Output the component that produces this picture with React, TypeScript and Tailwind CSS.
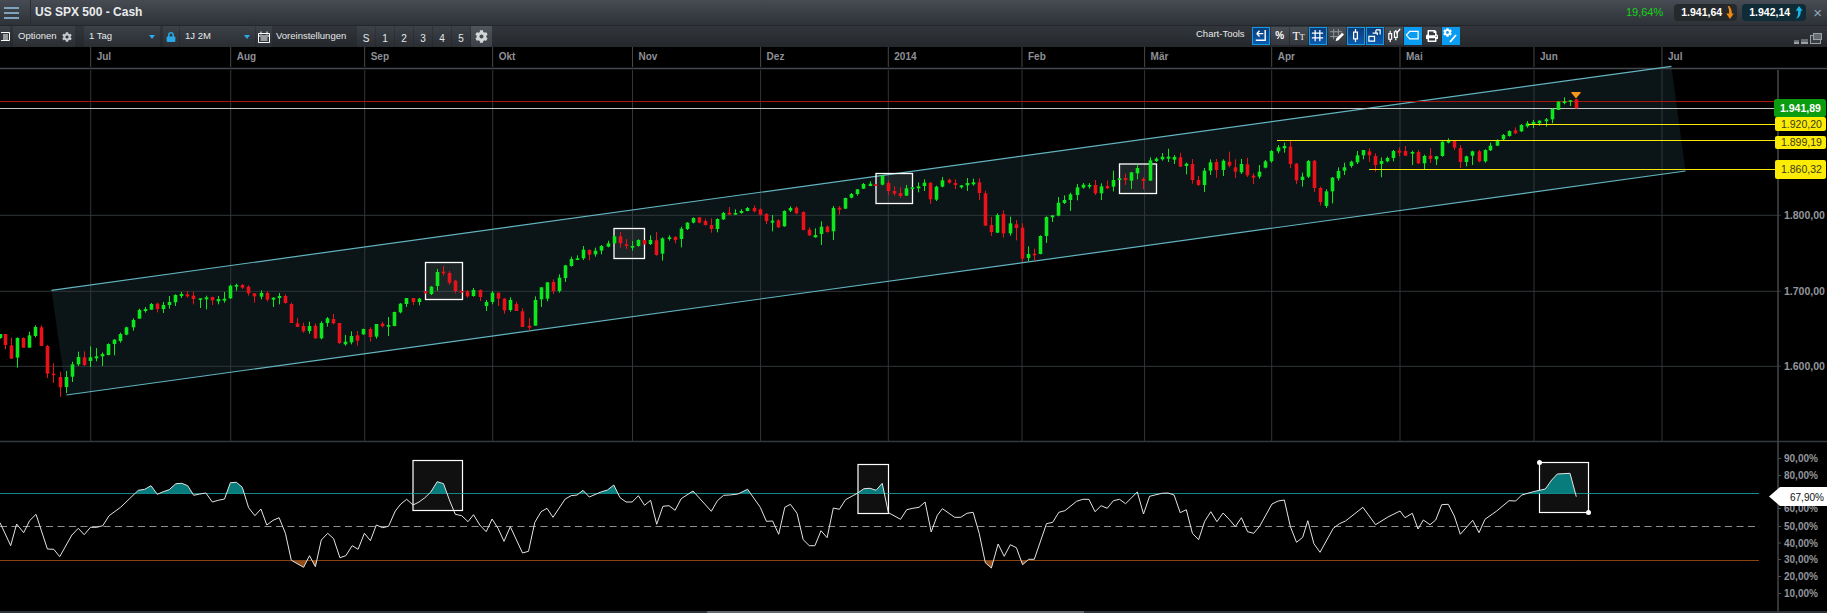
import type { ReactNode } from 'react';
import { FaCog, FaLock, FaPrint } from 'react-icons/fa';

type Row = [number, string, number, number, number, number];

// candles read off the picture: x, colour, wick top, body top, body bottom, wick bottom
const seg1: Row[] = [
  [0,'g',252,252,264,266],[16,'r',252,252,285,298],[34,'r',263,286,326,326],[52,'g',262,264,323,353],[70,'r',262,264,293,293],[88,'g',245,256,293,293],[107,'g',226,231,258,262],[125,'r',226,232,288,288],[143,'r',285,288,371,384],[161,'r',340,371,375,399],[180,'r',365,381,412,440],[198,'g',363,381,411,429],[217,'g',335,343,380,396],[235,'g',305,321,343,348],[253,'r',304,322,345,348],[271,'g',289,322,333,351],[289,'g',294,319,325,334],[307,'g',307,312,319,348],[326,'g',280,282,315,316],[344,'g',267,269,282,316],[362,'g',248,252,273,278],[380,'g',230,232,254,256],[399,'g',205,210,232,242],[417,'g',176,180,206,206],[436,'g',171,177,183,188],[454,'g',159,162,179,180],[472,'r',158,161,177,187],[490,'g',156,165,177,189],[508,'g',138,156,165,176],[527,'g',133,135,157,168],[545,'g',126,132,138,144],[563,'r',123,133,139,143],[581,'r',125,137,147,163],[600,'g',145,145,149,174],[619,'g',137,142,148,178],[637,'r',140,141,151,165],[655,'g',138,147,154,163],[673,'g',126,146,152,158],[691,'g',104,107,145,147],[709,'g',101,105,110,122],[728,'r',102,105,113,117],[746,'r',106,110,130,137],[764,'r',129,130,139,158],[783,'g',121,129,140,148],[801,'r',124,129,149,154],[819,'g',142,143,149,171],[838,'g',129,138,144,163],[856,'r',133,138,159,161],[874,'r',158,162,219,219],[892,'r',204,220,231,231],
];
const seg2: Row[] = [
  [10,'r',338,348,364,368],[28,'g',335,348,363,371],[46,'r',340,347,385,386],[65,'g',334,339,385,388],[83,'g',321,325,339,350],[101,'r',312,327,340,343],[119,'r',339,339,399,402],[137,'g',375,395,403,407],[155,'g',364,378,397,403],[173,'r',363,376,392,407],[191,'g',356,357,373,375],[210,'r',352,357,381,395],[229,'g',342,342,380,386],[247,'r',335,341,349,352],[265,'g',321,345,350,378],[284,'g',305,306,348,349],[302,'g',279,281,307,310],[320,'g',264,264,282,291],[340,'r',264,264,276,285],[358,'g',264,266,276,286],[376,'r',243,244,250,250],[394,'g',228,230,252,255],[412,'g',177,186,228,242],[430,'r',168,185,190,197],[449,'r',183,189,218,224],[466,'r',210,212,243,250],[484,'r',240,243,247,248],[503,'r',240,244,259,263],[521,'g',234,240,258,260],[540,'r',238,240,261,273],[558,'g',270,276,288,303],[577,'g',243,248,276,283],[595,'r',248,248,266,288],[613,'r',264,266,301,311],[632,'g',262,270,300,305],[650,'r',275,282,303,303],[668,'r',295,304,351,351],[687,'r',324,347,353,362],[705,'g',259,270,347,347],[723,'g',232,232,268,291],[741,'g',216,217,266,274],[760,'r',208,216,243,252],[778,'g',193,203,243,248],[797,'g',165,166,204,216],[814,'g',140,147,168,170],[832,'g',136,145,150,150],[850,'g',108,119,145,150],[868,'r',118,120,134,151],[887,'g',113,122,133,140],[905,'g',105,108,122,133],[924,'g',92,100,110,112],[942,'g',76,79,100,100],[960,'r',66,79,100,113],[979,'r',87,103,106,117],[997,'g',93,108,113,122],[1015,'g',88,90,108,110],[1033,'r',90,90,103,103],[1052,'g',76,90,102,105],[1070,'r',66,91,135,137],[1088,'g',82,85,131,152],[1107,'g',76,82,87,92],[1125,'r',78,81,90,100],[1143,'g',50,56,87,112],[1161,'g',36,38,57,60],[1180,'g',22,24,38,40],[1198,'r',22,22,38,40],
];
const seg3: Row[] = [
  [16,'r',176,183,195,197],[34,'r',175,195,207,218],[52,'g',175,177,207,217],[70,'g',156,159,178,180],[88,'r',141,158,164,164],[107,'g',148,159,164,165],[125,'g',148,153,159,161],[143,'g',141,144,153,154],[162,'r',136,144,154,157],[180,'r',145,148,164,167],[199,'r',159,162,183,192],[217,'g',165,182,188,214],[235,'r',178,181,202,204],[254,'g',151,153,199,200],[271,'g',139,144,152,156],[289,'r',139,143,160,163],[309,'r',154,156,210,211],[327,'r',202,209,226,228],[345,'g',205,225,232,233],[364,'g',184,200,222,255],[382,'r',196,200,216,218],[400,'g',138,144,214,240],[418,'r',138,143,149,164],[436,'g',113,114,146,147],[454,'g',99,102,113,115],[473,'g',87,88,102,107],[491,'g',69,72,86,87],[510,'g',64,71,78,79],[527,'r',72,73,78,78],[546,'g',47,47,74,76],[564,'r',62,69,93,105],[582,'r',79,93,101,107],[601,'r',82,99,108,114],[619,'g',75,85,107,108],[637,'g',81,82,87,88],[655,'g',67,79,85,97],[673,'g',58,68,78,93],[691,'r',67,68,118,132],[710,'g',77,80,119,123],[728,'g',51,61,80,82],[747,'r',56,59,68,71],[766,'r',58,69,75,87],[783,'g',75,76,82,86],[802,'g',54,69,76,93],[820,'g',56,67,73,77],[838,'r',55,67,99,120],[856,'r',92,100,197,197],[874,'r',171,195,216,228],[892,'g',160,165,218,219],[911,'r',151,162,220,233],[930,'g',170,190,220,227],[948,'r',180,193,204,241],[966,'r',190,203,296,306],[984,'g',259,282,294,304],[1003,'r',266,281,286,303],[1021,'g',226,228,282,283],[1040,'g',169,171,228,249],[1058,'g',166,166,172,186],[1076,'g',111,128,167,169],[1094,'g',106,120,129,132],[1112,'g',98,103,120,153],[1131,'g',72,82,105,121],[1149,'g',69,74,83,86],[1167,'g',69,75,80,86],
];
const seg4: Row[] = [
  [16,'r',150,165,190,195],[34,'g',160,169,190,210],[52,'r',152,168,175,177],[70,'g',122,150,170,184],[88,'g',145,145,150,150],[107,'r',131,144,150,165],[125,'g',126,127,152,177],[143,'g',104,114,130,148],[161,'r',142,147,153,178],[180,'g',82,91,152,152],[198,'g',82,86,93,96],[217,'g',69,80,88,92],[235,'g',56,80,86,96],[253,'g',75,81,89,102],[271,'r',68,82,110,111],[289,'g',98,101,108,133],[307,'r',87,102,150,161],[326,'r',138,150,165,168],[344,'g',114,122,165,186],[362,'g',88,97,122,135],[380,'r',87,96,120,143],[399,'g',88,92,120,138],[418,'r',65,95,107,112],[436,'r',88,112,125,144],[454,'g',87,102,127,132],[472,'r',83,103,136,141],[490,'r',130,137,143,162],[509,'g',105,125,140,146],[527,'g',90,94,113,115],[545,'g',60,63,94,98],[564,'g',45,52,64,70],[582,'g',38,48,55,68],[600,'r',32,50,102,114],[619,'r',99,101,151,162],[637,'g',128,140,150,170],[655,'g',90,93,140,144],[673,'r',90,92,174,186],[691,'r',170,174,216,226],[709,'g',178,184,228,234],[728,'g',141,143,184,220],[746,'g',112,123,145,152],[764,'g',98,112,122,135],[783,'g',92,95,108,113],[801,'g',63,76,97,102],[819,'g',60,60,76,88],[838,'r',55,64,76,96],[856,'r',70,78,105,125],[874,'g',82,93,102,142],[892,'g',80,84,94,97],[910,'g',60,63,84,94],[928,'r',52,62,68,79],[947,'r',48,63,77,78],[966,'g',62,66,71,105],[984,'r',60,66,100,102],[1002,'g',74,78,100,118],[1021,'r',54,77,87,99],[1039,'g',78,79,88,105],[1057,'g',34,35,78,80],[1075,'g',25,30,38,40],[1094,'r',30,32,53,60],[1112,'r',45,54,96,114],[1130,'g',77,79,96,109],[1148,'g',62,64,77,105],[1167,'r',60,64,94,97],[1185,'g',58,60,94,98],
];
const seg5: Row[] = [
  [568,'g',248,257,271,273],[587,'g',238,240,257,258],[605,'g',222,225,238,240],[623,'g',211,213,228,230],[641,'r',202,211,220,222],[659,'g',192,195,214,216],[677,'g',183,190,199,203],[695,'g',180,186,194,204],[713,'g',181,182,190,197],[732,'g',174,178,184,200],[750,'g',145,147,178,190],[768,'g',124,125,150,150],[786,'g',112,124,129,133],[804,'g',120,121,125,138],[822,'r',118,118,145,145],
];

const toFull = (rows: Row[], ox: number, oy: number, sx: number) =>
  rows.map(([x, c, wt, bt, bb, wb]) => ({
    x: ox + x / sx,
    c,
    wt: oy + wt / 3,
    bt: oy + bt / 3,
    bb: oy + bb / 3,
    wb: oy + wb / 3,
  }));

const candles = [
  ...toFull(seg1, 0, 250, 3),
  ...toFull(seg2, 300, 210, 3),
  ...toFull(seg3, 700, 160, 3),
  ...toFull(seg4, 1090, 130, 3),
  ...toFull(seg5, 1300, 60, 2.975),
];

const rsiA = [[0,278],[27,347],[42,282],[60,308],[75,272],[91,253],[120,357],[136,358],[151,380],[182,315],[198,295],[213,314],[229,292],[245,292],[260,287],[276,257],[305,232],[350,181],[366,178],[382,167],[398,193],[413,185],[428,179],[445,161],[460,160],[475,167],[490,196],[505,192],[521,189],[537,216],[552,211],[568,207],[583,158],[598,157],[613,172],[629,233],[645,257],[660,237],[675,285],[691,271],[706,263],[722,310],[737,391],[768,412],[783,377],[798,410],[813,330],[829,310],[844,326],[860,383],[875,377],[891,347],[906,358],[922,310],[937,332],[952,285],[968,293],[983,289],[1000,243],[1014,222],[1029,208],[1045,225],[1060,216],[1075,203],[1090,186],[1106,155],[1122,161],[1137,210],[1152,253],[1168,257],[1184,275],[1198,254],[1214,285],[1230,305],[1245,267],[1260,295],[1275,334],[1291,290],[1322,369],[1337,364],[1353,277],[1369,245],[1384,235],[1399,262],[1430,207],[1445,197],[1460,195],[1475,181],[1491,201],[1522,185],[1537,180],[1553,165]];
const rsiB = [[0,203],[12,216],[24,216],[36,197],[48,226],[60,211],[72,283],[84,229],[96,227],[108,241],[120,206],[143,183],[179,244],[191,212],[203,196],[215,195],[231,192],[250,178],[275,232],[287,274],[299,273],[311,313],[323,232],[334,223],[347,250],[359,329],[371,347],[382,347],[394,302],[406,323],[418,234],[430,238],[442,209],[466,189],[478,176],[490,175],[502,181],[514,160],[526,248],[550,268],[562,239],[574,235],[586,232],[598,216],[610,306],[622,256],[632,236],[656,262],[668,262],[680,250],[692,247],[704,310],[716,398],[728,414],[741,342],[753,379],[765,344],[777,353],[789,404],[801,388],[812,388],[836,281],[848,277],[860,247],[872,242],[895,214],[907,208],[919,208],[931,245],[943,227],[955,235],[967,212],[979,208],[991,221],[1014,186],[1026,252],[1038,199],[1062,190],[1074,189],[1086,195],[1098,248],[1110,239],[1122,310],[1134,329],[1146,274],[1158,245],[1170,275],[1182,249],[1194,268],[1206,290],[1218,263],[1230,305],[1242,310],[1254,288],[1278,222],[1290,213],[1302,210],[1314,290],[1326,337],[1338,322],[1348,272],[1360,341],[1372,367],[1398,295],[1410,281],[1422,273],[1456,232],[1481,284],[1505,261]];
const rsiC = [[0,243],[15,263],[37,250],[54,297],[70,270],[90,284],[107,270],[125,224],[145,223],[163,258],[181,313],[218,271],[237,308],[255,268],[290,243],[327,212],[347,213],[365,195],[400,185],[436,177],[455,150],[472,132],[510,130],[529,200]];

const rsiPoints = [
  ...rsiA.map(([x, y]) => [x / 2.53, 430 + y / 3]),
  ...rsiB.map(([x, y]) => [620 + x / 1.96, 430 + y / 3]),
  ...rsiC.map(([x, y]) => [1400 + x / 3, 430 + y / 3]),
];
const rsiLine = rsiPoints.map(([x, y]) => `${x.toFixed(1)},${y.toFixed(1)}`).join(' ');
const lastX = rsiPoints[rsiPoints.length - 1][0].toFixed(1);

const months = [
  ['Jul', 90.7], ['Aug', 230.7], ['Sep', 364.7], ['Okt', 492.7], ['Nov', 632.5], ['Dez', 760.6],
  ['2014', 888.3], ['Feb', 1022], ['Mär', 1144.6], ['Apr', 1271.7], ['Mai', 1400], ['Jun', 1534], ['Jul', 1662],
] as const;

const priceBoxes = [
  [425.5, 262.5, 37, 37],
  [614, 228.5, 30.5, 30],
  [876, 173.5, 36.5, 30],
  [1119.5, 164, 37, 29.5],
];
const rsiBoxes = [
  [413, 460.5, 49.5, 50],
  [858, 464.5, 30.5, 49],
  [1539.5, 462.5, 49, 50],
];
const rsiLabels = [
  ['90,00%', 458.5], ['80,00%', 475.5], ['60,00%', 508.5], ['50,00%', 526.5], ['40,00%', 543], ['30,00%', 559.5], ['20,00%', 576.5], ['10,00%', 593.5],
] as const;
const levelTags = [
  ['1.920,20', 117, 14, 124.5],
  ['1.899,19', 136, 13, 142.5],
  ['1.860,32', 160, 19, 169.5],
] as const;

function Btn({ w, className = '', children }: { w: string; className?: string; children?: ReactNode }) {
  return (
    <div className={`flex items-center justify-center bg-gradient-to-b from-[#3c4148] to-[#2a2e33] ${w} ${className}`}>
      {children}
    </div>
  );
}

function Caret() {
  return <div className="h-0 w-0 border-x-[3px] border-t-[4px] border-x-transparent border-t-[#29a9e8]" />;
}

function ToolBtn({ tone, children }: { tone: 'outline' | 'gray' | 'dark' | 'bright'; children: ReactNode }) {
  const tones = {
    outline: 'bg-gradient-to-b from-[#0a3c78] to-[#0b5bb0] border border-[#129be6]',
    gray: 'bg-gradient-to-b from-[#494e55] to-[#33373d]',
    dark: 'bg-gradient-to-b from-[#3f4349] to-[#2c3035]',
    bright: 'bg-[#0a9cf0]',
  };
  return <div className={`flex h-[18px] w-[18px] items-center justify-center ${tones[tone]}`}>{children}</div>;
}

function ToolIcon({ children }: { children: ReactNode }) {
  return (
    <svg viewBox="0 0 16 16" className="h-[15px] w-[15px]" fill="none" stroke="#fff" strokeWidth="1.3">
      {children}
    </svg>
  );
}

function ArrowTag({ color, up }: { color: string; up?: boolean }) {
  return (
    <svg viewBox="0 0 8 14" className="h-[13px] w-[8px]" fill={color}>
      {up ? <path d="M4 0l4 5H6c0 4-1 7-5 9 2-3 2-6 2-9H.5z" /> : <path d="M3 0c2 2 3 5 3 8h2l-4 6-4-6h3C3 5 3 3 1.5 0z" />}
    </svg>
  );
}

function TopBar() {
  return (
    <div className="flex h-[26px] items-stretch border-b border-[#23272b] bg-gradient-to-b from-[#474c54] to-[#2d3238]">
      <div className="flex w-[31px] flex-col justify-center gap-[3px] border-r border-[#2a2e33] pl-[4px]">
        <div className="h-[2px] w-[15px] bg-[#7fa3bb]" />
        <div className="h-[2px] w-[15px] bg-[#7fa3bb]" />
        <div className="h-[2px] w-[15px] bg-[#7fa3bb]" />
      </div>
      <div className="ml-[4px] flex items-center pb-px text-[12px] font-bold text-[#e9ebed]">US SPX 500 - Cash</div>
      <div className="ml-auto flex items-center">
        <span className="mr-[11px] text-[11px] text-[#14d414]">19,64%</span>
        <div className="flex h-[17px] w-[63px] items-center justify-between rounded-[4px] bg-[#26292b] pl-[7px] pr-[3px] text-[10.5px] font-bold text-white">
          1.941,64
          <ArrowTag color="#f08a10" />
        </div>
        <div className="ml-[5px] flex h-[17px] w-[64px] items-center justify-between rounded-[4px] bg-[#0f2b36] pl-[7px] pr-[3px] text-[10.5px] font-bold text-white">
          1.942,14
          <ArrowTag color="#19b4ea" up />
        </div>
        <span className="ml-[7px] mr-[5px] text-[15px] leading-none text-[#8fa6b6]">×</span>
      </div>
    </div>
  );
}

function ToolBar() {
  return (
    <div className="flex h-[21px] items-stretch bg-gradient-to-b from-[#32363b] to-[#24272b] text-[9.5px] text-[#e6e8ea]">
      <Btn w="w-[10px]">
        <svg viewBox="0 0 9 9" className="h-[9px] w-[9px]" fill="none" stroke="#fff">
          <path d="M0 .5h8.5v8H0M2 3h5M2 5h5M2 7h5" />
        </svg>
      </Btn>
      <Btn w="w-[62px]" className="ml-[3px] !justify-between pl-[5px] pr-[3px]">
        Optionen
        <FaCog className="text-[10px] text-[#c5c8cb]" />
      </Btn>
      <Btn w="w-[76px]" className="ml-[9px] !justify-between pl-[5px] pr-[5px]">
        1 Tag
        <Caret />
      </Btn>
      <Btn w="w-[16px]" className="ml-[3px]">
        <FaLock className="text-[10px] text-[#29a9e8]" />
      </Btn>
      <Btn w="w-[75px]" className="ml-px !justify-between pl-[5px] pr-[5px]">
        1J 2M
        <Caret />
      </Btn>
      <Btn w="w-[16px]" className="ml-px">
        <svg viewBox="0 0 12 12" className="h-[12px] w-[12px]" fill="none" stroke="#fff">
          <path d="M.5 2.5h11v9H.5zM3 .5v3M9 .5v3M.5 5h11M2.5 7h7M2.5 9h7" />
        </svg>
      </Btn>
      <div className="flex w-[85px] items-center pl-[4px]">Voreinstellungen</div>
      <div className="flex gap-px">
        {['S', '1', '2', '3', '4', '5'].map((n) => (
          <Btn key={n} w="w-[18px]" className="pt-[3px] text-[10px]">
            {n}
          </Btn>
        ))}
        <Btn w="w-[21px]" className="!from-[#50555b] !to-[#3c4046]">
          <FaCog className="text-[13px] text-[#d4d6d8]" />
        </Btn>
      </div>
      <div className="ml-[704px] flex items-center gap-px pb-[2px]">
        <span className="mr-[6px] pb-[2px]">Chart-Tools</span>
        <ToolBtn tone="outline">
          <ToolIcon>
            <path d="M4 6h7M4 6l3-3M4 6l3 3M13 2v11H3" strokeWidth="1.5" />
          </ToolIcon>
        </ToolBtn>
        <ToolBtn tone="gray">
          <span className="text-[10px] font-bold text-white">%</span>
        </ToolBtn>
        <ToolBtn tone="gray">
          <span className="font-['Liberation_Serif',serif] text-[12px] leading-none text-white">
            T<span className="text-[8px]">T</span>
          </span>
        </ToolBtn>
        <ToolBtn tone="outline">
          <ToolIcon>
            <path d="M5.5 2v12M10.5 2v12M2 5.5h12M2 10.5h12" />
          </ToolIcon>
        </ToolBtn>
        <ToolBtn tone="gray">
          <ToolIcon>
            <path d="M5 1v11M10 1v7M1 4h13M1 9h9" stroke="#9a9ea3" strokeWidth="1" />
            <path d="M7 14l1-3 6-6 2 2-6 6z" fill="#fff" stroke="none" />
          </ToolIcon>
        </ToolBtn>
        <ToolBtn tone="outline">
          <ToolIcon>
            <path d="M6 4.5h4v7H6zM8 1v3.5M8 11.5V15" />
          </ToolIcon>
        </ToolBtn>
        <ToolBtn tone="outline">
          <ToolIcon>
            <path d="M2 9h6v5H2zM6 5.5h5v2M9.5 2H14v5M9.5 5.500V2" />
          </ToolIcon>
        </ToolBtn>
        <ToolBtn tone="gray">
          <ToolIcon>
            <path d="M3 6h3v6H3zM4.500 3v3M4.500 12v3M9 4h3v6H9zM10.500 2v2M10.500 10v3" />
            <path d="M11 6l4-5" strokeWidth="1.500" />
          </ToolIcon>
        </ToolBtn>
        <ToolBtn tone="bright">
          <ToolIcon>
            <path d="M5 3.500h9v8H5L1.500 7.500z" />
          </ToolIcon>
        </ToolBtn>
        <ToolBtn tone="dark">
          <FaPrint className="text-[12px] text-white" />
        </ToolBtn>
        <ToolBtn tone="bright">
          <div className="relative h-[15px] w-[15px]">
            <FaCog className="text-[9px] text-white" />
            <svg viewBox="0 0 15 15" className="absolute inset-0" fill="none" stroke="#fff" strokeWidth="1.800">
              <path d="M7 14l6-7" />
            </svg>
          </div>
        </ToolBtn>
      </div>
      <div className="ml-auto mr-[6px] flex items-end gap-[2px] pb-[3px]">
        <div className="h-[4px] w-[5px] border-b-[2px] border-[#9aa0a6] bg-[#646a70]" />
        <div className="h-[5px] w-[7px] border-b-[2px] border-[#9aa0a6] bg-[#646a70]" />
        <div className="relative h-[9px] w-[11px] border border-[#9aa0a6] bg-[#3a3f44]">
          <div className="absolute -top-[3px] left-[2px] h-[7px] w-[9px] border border-[#9aa0a6] bg-[#646a70]" />
        </div>
      </div>
    </div>
  );
}

function Chart() {
  return (
    <svg viewBox="0 47 1827 564" className="block h-[564px] w-[1827px] font-['Liberation_Sans',Arial,sans-serif]">
      <defs>
        <clipPath id="over">
          <rect x="0" y="440" width="1778" height="53.300" />
        </clipPath>
        <clipPath id="under">
          <rect x="0" y="560.300" width="1778" height="50" />
        </clipPath>
      </defs>

      {/* channel */}
      <polygon points="51.400,290.300 1671.400,66.300 1685.500,171 66.400,395" fill="#0b1416" />

      {/* grid */}
      {months.map(([m, x], i) => (
        <g key={`${m}${i}`}>
          <line x1={x} x2={x} y1="47" y2="67" stroke="#44484d" />
          <line x1={x} x2={x} y1="70" y2="441" stroke="#30363a" />
          <text x={x + 6} y="60" className="fill-[#8d9197] text-[10px] font-bold">
            {m}
          </text>
        </g>
      ))}
      {[215.300, 291.300, 366.300].map((y) => (
        <line key={y} x1="0" x2="1781" y1={y} y2={y} stroke="#30363a" />
      ))}
      <line x1="0" x2="1827" y1="68.500" y2="68.500" stroke="#44484d" strokeWidth="1.500" />
      <line x1="0" x2="1827" y1="441.500" y2="441.500" stroke="#32383f" strokeWidth="1.500" />
      <line x1="1778" x2="1778" y1="70" y2="611" stroke="#44484d" strokeWidth="1.500" />

      {/* channel edges */}
      <line x1="51.400" y1="290.300" x2="1671.400" y2="66.300" stroke="#62b4c0" strokeWidth="1.200" />
      <line x1="66.400" y1="395" x2="1685.500" y2="171" stroke="#62b4c0" strokeWidth="1.200" />

      {priceBoxes.map(([x, y, w, h]) => (
        <rect key={x} x={x} y={y} width={w} height={h} fill="#ffffff" fillOpacity="0.07" stroke="#ffffff" strokeWidth="1.300" />
      ))}

      {/* levels */}
      <line x1="0" x2="1778" y1="101.500" y2="101.500" stroke="#a81414" />
      <line x1="0" x2="1778" y1="108.500" y2="108.500" stroke="#c4c4c4" />

      {/* candles */}
      {candles.map((k, i) => {
        const cx = Math.round(k.x - 0.5);
        const fill = k.c === 'g' ? '#0ee61e' : '#ea121a';
        return (
          <g key={i} fill={fill}>
            <rect x={cx} y={k.wt} width="1" height={Math.max(k.wb - k.wt, 1)} />
            <rect x={cx - 1.300} y={k.bt} width="3.600" height={Math.max(k.bb - k.bt, 1.500)} />
          </g>
        );
      })}

      <line x1="1528" x2="1778" y1="124.500" y2="124.500" stroke="#f7e80a" />
      <line x1="1277" x2="1778" y1="140.500" y2="140.500" stroke="#f7e80a" />
      <line x1="1369" x2="1778" y1="169.500" y2="169.500" stroke="#f7e80a" />
      <path d="M1571 92.500q0-.5 1-.5h8q1 0 1 .5l-5 6z" fill="#f7941d" />

      {/* price axis */}
      {[['1.800,00', 215.300], ['1.700,00', 291.300], ['1.600,00', 366.300]].map(([t, y]) => (
        <text key={t} x="1784" y={Number(y) + 3.500} className="fill-[#92969c] text-[10.500px] font-bold">
          {t}
        </text>
      ))}

      {levelTags.map(([t, y, h, base]) => (
        <g key={t}>
          <rect x="1775" y={y} width="51" height={h} rx="2" fill="#fcec05" />
          <text x="1781" y={base + 3} className="fill-[#3a3a20] text-[10.500px]">
            {t}
          </text>
        </g>
      ))}
      <rect x="1774" y="99" width="52" height="18" rx="2.500" fill="#0c9c10" />
      <text x="1780" y="112" className="fill-white text-[10.500px] font-bold">
        1.941,89
      </text>

      {/* RSI */}
      <line x1="0" x2="1759" y1="493.500" y2="493.500" stroke="#158a8a" />
      <line x1="0" x2="1756" y1="526.500" y2="526.500" stroke="#8e8e8e" strokeDasharray="7 4.500" />
      <line x1="0" x2="1759" y1="560.500" y2="560.500" stroke="#8a4210" />
      {rsiBoxes.map(([x, y, w, h]) => (
        <rect key={x} x={x} y={y} width={w} height={h} fill="#101010" stroke="#ffffff" strokeWidth="1.200" />
      ))}
      <line x1="1539.500" x2="1588.500" y1="493.500" y2="493.500" stroke="#158a8a" />
      <line x1="413" x2="462.500" y1="493.500" y2="493.500" stroke="#158a8a" />
      <line x1="858" x2="888.500" y1="493.500" y2="493.500" stroke="#158a8a" />
      <line x1="413" x2="462.500" y1="526.500" y2="526.500" stroke="#8e8e8e" strokeDasharray="7 4.500" opacity="0" />
      <g clipPath="url(#over)">
        <polygon points={`${rsiLine} ${lastX},493.500 0,493.500`} fill="#087c7c" />
      </g>
      <g clipPath="url(#under)">
        <polygon points={`${rsiLine} ${lastX},560.300 0,560.300`} fill="#8f4c18" />
      </g>
      <polyline points={rsiLine} fill="none" stroke="#e4e4e4" strokeWidth="1" strokeLinejoin="round" />
      <circle cx="1539.500" cy="462.500" r="2.500" fill="#fff" />
      <circle cx="1588.500" cy="512.500" r="2.500" fill="#fff" />

      {rsiLabels.map(([t, y]) => (
        <g key={t}>
          <line x1="1778" x2="1781" y1={y} y2={y} stroke="#4a4e53" />
          <text x="1784" y={y + 3.500} className="fill-[#92969c] text-[10px] font-bold">
            {t}
          </text>
        </g>
      ))}
      <path d="M1769 496.500l11-9.500h47v19h-47z" fill="#fff" />
      <text x="1790" y="500.500" className="fill-[#111] text-[10px]">
        67,90%
      </text>
    </svg>
  );
}

export default function App() {
  return (
    <div className="flex h-[613px] w-[1827px] flex-col overflow-hidden bg-black font-['Liberation_Sans',Arial,sans-serif]">
      <TopBar />
      <ToolBar />
      <Chart />
      <div className="h-[2px] bg-[#2e3237] pl-[707px]">
        <div className="h-full w-[377px] bg-[#62676d]" />
      </div>
    </div>
  );
}
